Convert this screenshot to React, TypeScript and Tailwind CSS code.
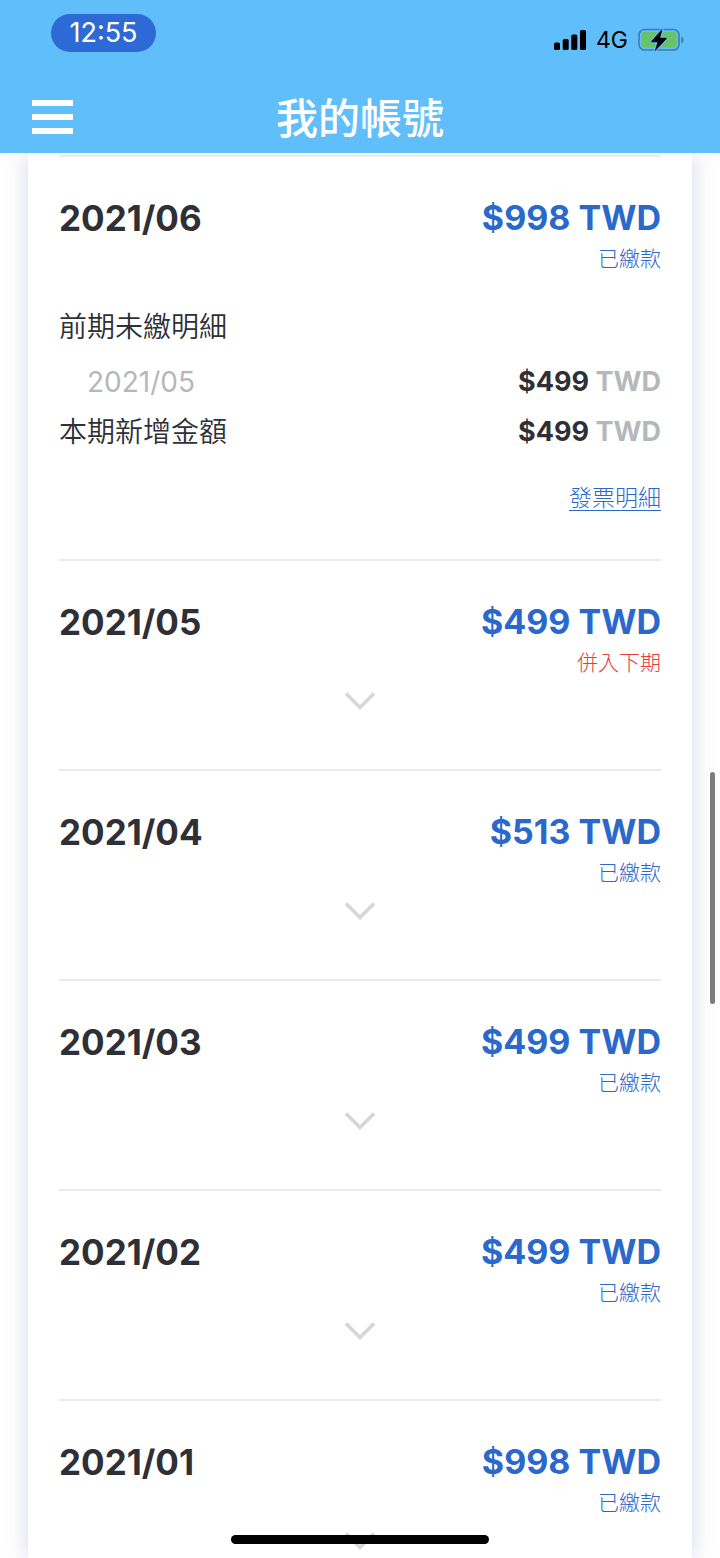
import React, { useState } from "react";

interface DetailRow {
  label:  string;
  amount: number;
  nested: boolean;
}

interface Bill {
  period: string;
  amount: number;
  status: "paid" | "merged";
}

const STATUS_META: Record<Bill["status"], { label: string; cls: string }> = {
  paid:   { label: "已繳款",   cls: "text-[#2a68cc]" },
  merged: { label: "併入下期", cls: "text-[#e0403c]" },
};

const BILLS: Bill[] = [
  { period: "2021/06", amount: 998, status: "paid" },
  { period: "2021/05", amount: 499, status: "merged" },
  { period: "2021/04", amount: 513, status: "paid" },
  { period: "2021/03", amount: 499, status: "paid" },
  { period: "2021/02", amount: 499, status: "paid" },
  { period: "2021/01", amount: 998, status: "paid" },
];

const DETAIL_ROWS: DetailRow[] = [
  { label: "2021/05",      amount: 499, nested: true },
  { label: "本期新增金額", amount: 499, nested: false },
];

export default function App() {
  const [open, setOpen] = useState("2021/06");

  return (
    <div className="relative flex h-screen flex-col overflow-hidden bg-white font-['Inter','Noto_Sans_CJK_TC',sans-serif] text-[#2f2f36]">
      <header className="z-10 shrink-0 bg-[#60bffb]">
        <StatusBar />
        <div className="grid h-[73px] grid-cols-[1fr_auto_1fr] items-center px-8">
          <button type="button" aria-label="選單" className="flex w-[41px] flex-col gap-2">
            <span className="h-1.5 bg-white" />
            <span className="h-1.5 bg-white" />
            <span className="h-1.5 bg-white" />
          </button>
          <h1 className="pt-1 text-[42px] leading-[56px] font-medium text-white">我的帳號</h1>
        </div>
      </header>

      <main className="mx-7 flex-1 overflow-hidden bg-white px-[31px] pt-0.5 shadow-[0_0_22px_rgba(90,95,170,0.26)]">
        {BILLS.map((bill) => (
          <BillSection
            key={bill.period}
            bill={bill}
            expanded={open === bill.period}
            onExpand={() => setOpen(bill.period)}
          />
        ))}
      </main>

      {/* Scroll thumb and home indicator float over the page */}
      <div className="absolute top-[772px] right-[5px] z-20 h-[232px] w-[5px] rounded-full bg-[#7d7d7d]" />
      <div className="absolute bottom-3.5 left-1/2 z-20 h-[9px] w-[258px] -translate-x-1/2 rounded-full bg-black" />
    </div>
  );
}

function StatusBar() {
  return (
    <div className="flex h-20 items-start justify-between pt-3.5 pr-9 pl-[51px]">
      <div className="flex h-[38px] w-[105px] items-center justify-center rounded-full bg-[#2e6ad6] text-[27px] text-white">
        12:55
      </div>
      <div className="flex h-[52px] items-center gap-2.5 text-black">
        <svg width="32" height="22" viewBox="0 0 32 22" fill="currentColor" aria-hidden="true">
          <rect x="0" y="13.5" width="6" height="7.5" rx="1.6" />
          <rect x="8.7" y="10" width="6" height="11" rx="1.6" />
          <rect x="17.3" y="5.5" width="6" height="15.5" rx="1.6" />
          <rect x="26" y="1" width="6" height="20" rx="1.6" />
        </svg>
        <span className="text-[23px]">4G</span>
        <svg width="46" height="24" viewBox="0 0 46 24" aria-hidden="true">
          <rect x="1" y="1.5" width="40" height="20.5" rx="5.5" fill="none" stroke="#3f7ea6" strokeWidth="1.6" />
          <rect x="3.4" y="4" width="35.2" height="15.5" rx="3" fill="#65c466" />
          <path d="M43.2 8.8c1.6.5 2.4 1.7 2.4 3.2s-.8 2.7-2.4 3.2z" fill="#3f7ea6" />
          <path
            d="M24.6.6 13.3 13.2c-.4.5-.1 1.1.5 1.1h5.7L16.6 23.4 28.5 10.9c.4-.5.1-1.1-.5-1.1h-5.8z"
            fill="#000"
            stroke="#60bffb"
            strokeWidth="2.4"
            strokeLinejoin="round"
            paintOrder="stroke"
          />
        </svg>
      </div>
    </div>
  );
}

function BillSection({
  bill,
  expanded,
  onExpand,
}: {
  bill: Bill;
  expanded: boolean;
  onExpand: () => void;
}) {
  const status = STATUS_META[bill.status];

  return (
    <section className="border-t-2 border-[#ebebeb] pt-10">
      <div className="flex items-center justify-between leading-[42px] font-bold">
        <h2 className="text-[35px]">{bill.period}</h2>
        <div className="text-[34px] text-[#2a68cc]">${bill.amount} TWD</div>
      </div>
      <div className={`mt-1 text-right text-[21px] leading-8 font-light ${status.cls}`}>{status.label}</div>

      {expanded ? (
        <BillDetail />
      ) : (
        <button
          type="button"
          aria-label={`展開 ${bill.period}`}
          onClick={onExpand}
          className="mt-3 flex w-full justify-center pb-[58px]"
        >
          <svg width="32" height="20" viewBox="0 0 32 20" fill="none" stroke="#d6d6d6" strokeWidth="3.6" aria-hidden="true">
            <path d="M2 2.5 16 16.5 30 2.5" />
          </svg>
        </button>
      )}
    </section>
  );
}

function BillDetail() {
  return (
    <div className="mt-8 pb-11">
      <h3 className="mb-2.5 text-[28px] leading-10 font-[350]">前期未繳明細</h3>
      {DETAIL_ROWS.map((row) => (
        <div key={row.label} className="flex items-center justify-between leading-[50px]">
          <span className={`text-[28px] ${row.nested ? "pl-7 font-normal text-[#b4b8bb]" : "font-[350]"}`}>
            {row.label}
          </span>
          <span className="text-[27px] font-bold">
            ${row.amount} <span className="text-[#b4b8bb]">TWD</span>
          </span>
        </div>
      ))}
      <div className="mt-6 text-right text-[23px] leading-[34px] font-light">
        <a href="#invoice" className="text-[#2a68cc] underline decoration-1 underline-offset-4">發票明細</a>
      </div>
    </div>
  );
}
